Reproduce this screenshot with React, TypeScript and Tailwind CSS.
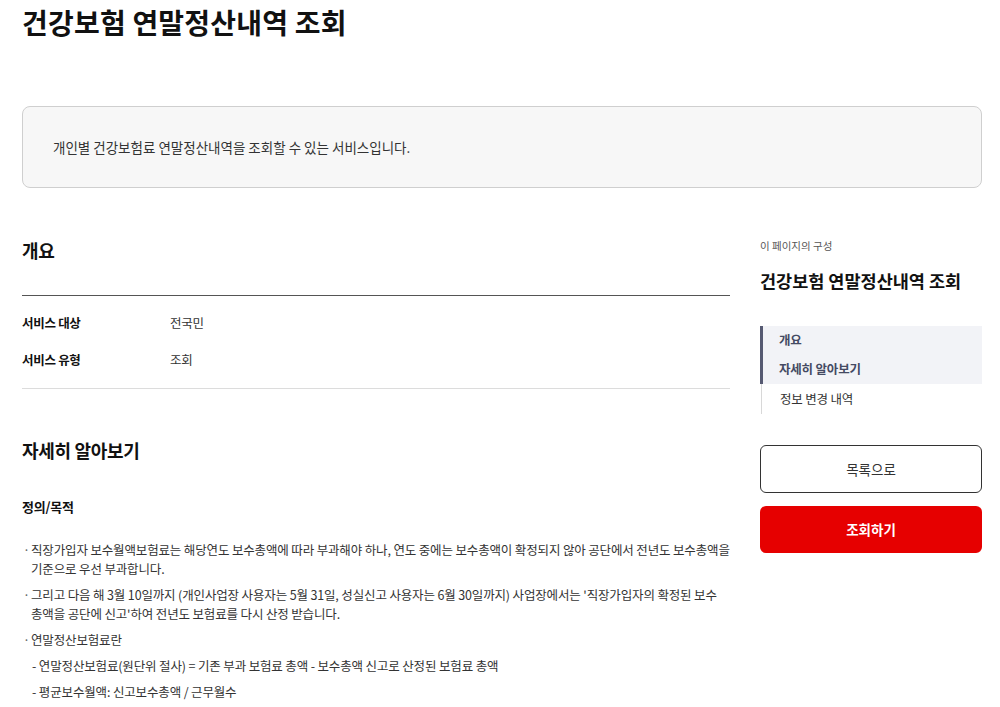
export default function App() {
  return (
    <div className="min-h-screen bg-white pl-[22px] pr-[18px] font-['Noto_Sans_CJK_KR','Noto_Sans',sans-serif] text-[#222]">
      <h1 className="pt-[4px] text-[28px] font-bold leading-[36px] tracking-[0.2px] text-[#111]">
        건강보험 연말정산내역 조회
      </h1>

      <div className="mt-[66px] flex h-[82px] items-center rounded-[8px] border border-[#cfcfcf] bg-[#f7f7f7] px-[30px]">
        <p className="text-[13.5px] text-[#333]">
          개인별 건강보험료 연말정산내역을 조회할 수 있는 서비스입니다.
        </p>
      </div>

      <div className="flex gap-[30px]">
        <main className="w-[708px] shrink-0">
          <h2 className="mt-[50px] text-[18px] font-bold leading-[24px] tracking-[-0.3px] text-[#111]">개요</h2>
          <div className="mt-[33px] border-t border-[#555]" />
          <dl className="flex flex-col gap-[19px] pt-[18px] pb-[19px] text-[12.5px] leading-[18px] tracking-[-0.3px]">
            <div className="flex">
              <dt className="w-[148px] font-bold text-[#111]">서비스 대상</dt>
              <dd className="text-[#333]">전국민</dd>
            </div>
            <div className="flex">
              <dt className="w-[148px] font-bold text-[#111]">서비스 유형</dt>
              <dd className="text-[#333]">조회</dd>
            </div>
          </dl>
          <div className="border-t border-[#dcdcdc]" />

          <h2 className="mt-[49px] text-[18px] font-bold leading-[24px] tracking-[-0.3px] text-[#111]">자세히 알아보기</h2>
          <h3 className="mt-[35px] text-[13px] font-bold leading-[20px] tracking-[-0.2px] text-[#111]">정의/목적</h3>

          <ul className="mt-[23px] flex flex-col gap-[7px] text-[12.5px] leading-[19px] tracking-[-0.15px] text-[#333]">
            <li className="relative pl-[9px]">
              <span className="absolute left-[1px] top-0 text-[#666]">·</span>
              직장가입자 보수월액보험료는 해당연도 보수총액에 따라 부과해야 하나, 연도 중에는 보수총액이 확정되지 않아 공단에서 전년도 보수총액을
              기준으로 우선 부과합니다.
            </li>
            <li className="relative pl-[9px]">
              <span className="absolute left-[1px] top-0 text-[#666]">·</span>
              그리고 다음 해 3월 10일까지 (개인사업장 사용자는 5월 31일, 성실신고 사용자는 6월 30일까지) 사업장에서는 '직장가입자의 확정된 보수
              총액을 공단에 신고'하여 전년도 보험료를 다시 산정 받습니다.
            </li>
            <li className="relative pl-[9px]">
              <span className="absolute left-[1px] top-0 text-[#666]">·</span>
              연말정산보험료란
              <div className="mt-[7px] flex flex-col gap-[7px] pl-[1px]">
                <p>- 연말정산보험료(원단위 절사) = 기존 부과 보험료 총액 - 보수총액 신고로 산정된 보험료 총액</p>
                <p>- 평균보수월액: 신고보수총액 / 근무월수</p>
              </div>
            </li>
          </ul>
        </main>

        <aside className="w-[222px] shrink-0">
          <p className="mt-[50px] text-[10.5px] leading-[16px] text-[#555]">이 페이지의 구성</p>
          <p className="mt-[15px] text-[17.5px] font-bold leading-[24px] text-[#111]">건강보험 연말정산내역 조회</p>

          <nav className="mt-[33px] text-[12.5px] tracking-[-0.2px]">
            <div className="border-l-[3px] border-[#565a72] bg-[#f2f3f7]">
              <a className="flex h-[29px] items-center pl-[16px] font-bold text-[#444a63]">개요</a>
              <a className="flex h-[29px] items-center pl-[16px] font-bold text-[#444a63]">자세히 알아보기</a>
            </div>
            <a className="ml-[1px] flex h-[30px] items-center border-l border-[#d8d8d8] pl-[18px] text-[#333]">정보 변경 내역</a>
          </nav>

          <button className="mt-[31px] flex h-[48px] w-full items-center justify-center rounded-[6px] border border-[#333] bg-white text-[13.5px] text-[#333]">
            목록으로
          </button>
          <button className="mt-[13px] flex h-[47px] w-full items-center justify-center rounded-[6px] bg-[#e60000] text-[13.5px] font-bold text-white">
            조회하기
          </button>
        </aside>
      </div>
    </div>
  );
}
